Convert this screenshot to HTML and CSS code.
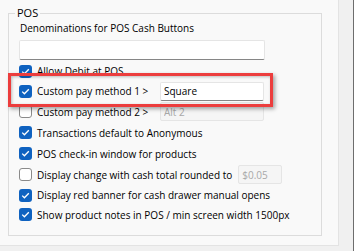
FILE: index.html
```html
<!DOCTYPE html>
<html lang="en">
<head>
    <meta charset="UTF-8">
    <title>POS Settings</title>
    <link rel="stylesheet" href="styles.css">
</head>
<body>

<div class="screen">
    <div class="panel">
        <fieldset class="group">
            <legend>POS</legend>
            <div class="group-body">
                <div class="field-label">Denominations for POS Cash Buttons</div>
                <input type="text" class="text-box wide" value="">

                <div class="row r20">
                    <span class="check on"><svg viewBox="0 0 13 13"><polyline points="3.2,6.6 5.4,8.8 9.8,4.2"/></svg></span>
                    <span class="caption">Allow Debit at POS</span>
                </div>
                <div class="row r20">
                    <span class="check on"><svg viewBox="0 0 13 13"><polyline points="3.2,6.6 5.4,8.8 9.8,4.2"/></svg></span>
                    <span class="caption fixed">Custom pay method 1 &gt;</span>
                    <input type="text" class="text-box pay" value="Square">
                </div>
                <div class="row r21">
                    <span class="check"></span>
                    <span class="caption fixed">Custom pay method 2 &gt;</span>
                    <input type="text" class="text-box pay" value="Alt 2" disabled>
                </div>
                <div class="row r21">
                    <span class="check on"><svg viewBox="0 0 13 13"><polyline points="3.2,6.6 5.4,8.8 9.8,4.2"/></svg></span>
                    <span class="caption">Transactions default to Anonymous</span>
                </div>
                <div class="row r21">
                    <span class="check on"><svg viewBox="0 0 13 13"><polyline points="3.2,6.6 5.4,8.8 9.8,4.2"/></svg></span>
                    <span class="caption">POS check-in window for products</span>
                </div>
                <div class="row r21">
                    <span class="check"></span>
                    <span class="caption">Display change with cash total rounded to</span>
                    <input type="text" class="text-box round" value="$0.05" disabled>
                </div>
                <div class="row r20">
                    <span class="check on"><svg viewBox="0 0 13 13"><polyline points="3.2,6.6 5.4,8.8 9.8,4.2"/></svg></span>
                    <span class="caption">Display red banner for cash drawer manual opens</span>
                </div>
                <div class="row r19">
                    <span class="check on"><svg viewBox="0 0 13 13"><polyline points="3.2,6.6 5.4,8.8 9.8,4.2"/></svg></span>
                    <span class="caption">Show product notes in POS / min screen width 1500px</span>
                </div>
            </div>
        </fieldset>

        <!-- highlight drawn over the first custom pay method -->
        <div class="highlight"></div>
    </div>
    <div class="side-strip"></div>
</div>

</body>
</html>
```

FILE: styles.css
```css
body {
    margin: 0;
    background-color: #f0f0f0;
    font-family: "Open Sans", "Liberation Sans", sans-serif;
    font-size: 10px;
    color: #000;
}

.screen {
    display: flex;
    width: 354px;
    height: 251px;
}

.panel {
    position: relative;
    width: 338px;
    height: 245px;
    background-color: #f9f9f9;
    border-right: 1px solid #e3e3e3;
    border-bottom: 1px solid #e3e3e3;
}

.side-strip {
    flex: 1;
    border-right: 1px solid #6d6d6d;
}

.group {
    box-sizing: border-box;
    width: 314px;
    height: 230px;
    margin: 6px 0 0 8px;
    padding: 0;
    border: 1px solid #dcdcdc;
}

.group legend {
    margin-left: 6px;
    padding: 0 2px;
    line-height: 14px;
    font-size: 11px;
}

.group-body {
    padding-left: 10px;
}

.field-label {
    line-height: 16px;
    padding-left: 1px;
}

.text-box {
    box-sizing: border-box;
    font-family: inherit;
    font-size: 10px;
    color: #000;
    background-color: #fff;
    border: 1px solid #e5e5e5;
    border-bottom: 1px solid #868686;
    border-radius: 2px;
    padding: 0 3px;
    outline: none;
}

.text-box:disabled {
    background-color: #f5f5f5;
    border: 1px solid #e5e5e5;
    color: #a8a8a8;
}

.wide {
    display: block;
    width: 246px;
    height: 20px;
    margin-top: 4px;
    margin-bottom: 1px;
}

.row {
    display: flex;
    align-items: center;
}

.r19 { height: 19px; }
.r20 { height: 20px; }
.r21 { height: 21px; }

.check {
    box-sizing: border-box;
    width: 13px;
    height: 13px;
    border: 1px solid #8a8a8a;
    border-radius: 3px;
    background-color: #fff;
    margin-right: 5px;
    flex-shrink: 0;
}

.check.on {
    border: none;
    background-color: #0f62c0;
}

.check svg {
    display: block;
    width: 13px;
    height: 13px;
}

.check polyline {
    fill: none;
    stroke: #fff;
    stroke-width: 1.3;
}

.caption {
    white-space: nowrap;
}

.caption.fixed {
    width: 123px;
}

.pay {
    width: 104px;
    height: 19px;
}

.round {
    width: 44px;
    height: 19px;
    margin-left: 6px;
}

.highlight {
    position: absolute;
    left: 8px;
    top: 73px;
    width: 265px;
    height: 34px;
    box-sizing: border-box;
    border: 3px solid #ec3d3d;
    box-shadow: 2px 2px 4px rgba(0, 0, 0, 0.35), inset 1px 1px 3px rgba(0, 0, 0, 0.25);
}
```
